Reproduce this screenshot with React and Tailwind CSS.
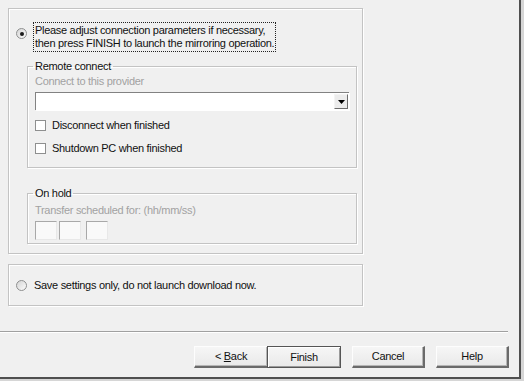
import React from 'react';

const FONT = { fontFamily: '"Liberation Sans", Arial, sans-serif' };

const Radio = ({ checked }) => (
    <span className="flex h-[11px] w-[11px] shrink-0 items-center justify-center rounded-full border border-[#8e8f8f] bg-gradient-to-br from-[#d4d4d4] to-[#fcfcfc]">
        {checked && <span className="h-[4px] w-[4px] rounded-full bg-[#1a1a1a]" />}
    </span>
);

const Checkbox = ({ label, className = '' }) => (
    <div className={`flex items-center ${className}`}>
        <span className="h-[11px] w-[11px] shrink-0 border border-[#8e8f8f] bg-white" />
        <span className="ml-[6px] leading-[13px]">{label}</span>
    </div>
);

const Group = ({ title, className = '', children }) => (
    <fieldset className={`border border-[#c3c3c3] pl-[7px] shadow-[inset_1px_1px_0_#fff,1px_1px_0_#fff] ${className}`}>
        <legend className="ml-[-2px] px-[2px] leading-[13px]">{title}</legend>
        {children}
    </fieldset>
);

const Button = ({ children, isDefault, className = '' }) => (
    <button
        className={`h-[22px] bg-gradient-to-b from-[#f6f6f6] to-[#e9e9e9] text-[11px] tracking-[-0.3px] text-[#111] ${
            isDefault
                ? 'border border-[#555] shadow-[inset_1px_1px_0_#fff,inset_-1px_-1px_0_#9a9a9a]'
                : 'border-t border-l border-t-[#fdfdfd] border-l-[#fdfdfd] border-r-2 border-b-2 border-r-[#6a6a6a] border-b-[#6a6a6a] shadow-[inset_-1px_-1px_0_#b5b5b5]'
        } ${className}`}
    >
        {children}
    </button>
);

const TimeBox = () => (
    <span className="h-[19px] w-[22px] border-t border-l border-t-[#a8a8a8] border-l-[#a8a8a8] border-r border-b border-r-[#e8e8e8] border-b-[#e8e8e8] bg-[#f9f9f9]" />
);

export default function App() {
    return (
        <div className="h-[381px] w-[524px] overflow-hidden bg-[#d6d6d6]" style={FONT}>
            <div className="flex h-[379px] w-[521px] flex-col border-r-2 border-b-2 border-[#4f4f4f] bg-[#f0f0f0] text-[11px] tracking-[-0.3px] text-[#111]">
                <div className="pt-[8px] pl-[8px]">
                    {/* launch option */}
                    <div className="h-[246px] w-[355px] border border-[#c3c3c3] shadow-[inset_1px_1px_0_#fff,1px_1px_0_#fff]">
                        <div className="mt-[13px] flex items-start">
                            <div className="mt-[6px] ml-[7px]"><Radio checked /></div>
                            <div className="ml-[6px] border border-dotted border-[#222] px-[1px] py-[1px] leading-[13px]">
                                Please adjust connection parameters if necessary,<br />
                                then press FINISH to launch the mirroring operation.
                            </div>
                        </div>

                        <Group title="Remote connect" className="mt-[8px] ml-[18px] h-[108px] w-[330px]">
                            <div className="mt-[2px] leading-[13px] text-[#a2a2a2]">Connect to this provider</div>
                            <div className="mt-[4px] flex h-[18px] w-[314px] border-t border-l border-t-[#828282] border-l-[#828282] bg-white shadow-[1px_1px_0_#fff]">
                                <div className="flex-1" />
                                <div className="m-[1px] flex w-[14px] items-center justify-center border-t border-l border-t-[#f4f4f4] border-l-[#f4f4f4] border-r border-b border-r-[#6d6d6d] border-b-[#6d6d6d] bg-[#ececec]">
                                    <svg width="7" height="4" viewBox="0 0 7 4"><path d="M0 0h7L3.5 4z" fill="#000" /></svg>
                                </div>
                            </div>
                            <Checkbox label="Disconnect when finished" className="mt-[9px]" />
                            <Checkbox label="Shutdown PC when finished" className="mt-[10px]" />
                        </Group>

                        <Group title="On hold" className="mt-[19px] ml-[18px] h-[57px] w-[330px]">
                            <div className="mt-[4px] leading-[13px] text-[#a2a2a2]">Transfer scheduled for: (hh/mm/ss)</div>
                            <div className="mt-[4px] flex gap-[2px]">
                                <TimeBox />
                                <TimeBox />
                                <span className="ml-[3px] flex"><TimeBox /></span>
                            </div>
                        </Group>
                    </div>

                    {/* save option */}
                    <div className="mt-[10px] flex h-[42px] w-[355px] items-center border border-[#c3c3c3] shadow-[inset_1px_1px_0_#fff,1px_1px_0_#fff]">
                        <div className="ml-[7px]"><Radio /></div>
                        <span className="ml-[7px]">Save settings only, do not launch download now.</span>
                    </div>
                </div>

                <div className="mt-[25px] h-[2px] w-[508px] border-t border-[#a0a0a0] border-b border-b-white" />

                <div className="mt-[13px] flex w-[509px] justify-end gap-[11px]">
                    <div className="flex">
                        <Button className="mr-[-2px] w-[75px]"><span>&lt; <u>B</u>ack</span></Button>
                        <Button isDefault className="w-[74px]">Finish</Button>
                    </div>
                    <Button className="w-[73px]">Cancel</Button>
                    <Button className="w-[73px]">Help</Button>
                </div>
            </div>
        </div>
    );
}
